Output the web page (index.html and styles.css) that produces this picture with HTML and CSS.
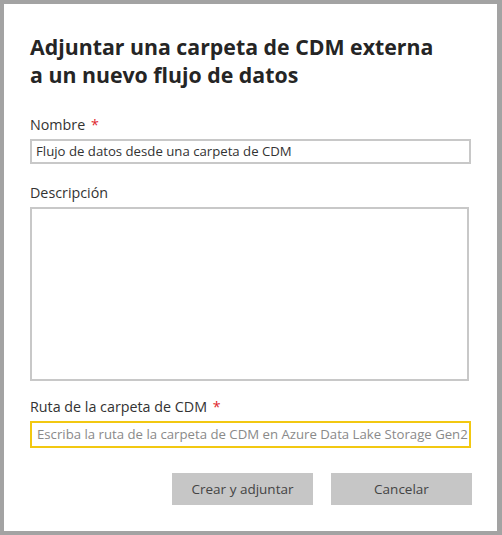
FILE: index.html
```html
<!DOCTYPE html>
<html lang="es">
<head>
<meta charset="utf-8">
<link rel="stylesheet" href="styles.css">
</head>
<body>
<div class="dialog">
  <h1 class="title">Adjuntar una carpeta de CDM externa<br>a un nuevo flujo de datos</h1>
  <div class="field">
    <label class="label">Nombre <span class="req">*</span></label>
    <div class="input">Flujo de datos desde una carpeta de CDM</div>
  </div>
  <div class="field field-desc">
    <label class="label">Descripción</label>
    <div class="textarea"></div>
  </div>
  <div class="field field-path">
    <label class="label">Ruta de la carpeta de CDM <span class="req">*</span></label>
    <div class="input input-focus">Escriba la ruta de la carpeta de CDM en Azure Data Lake Storage Gen2</div>
  </div>
  <div class="actions">
    <button class="btn">Crear y adjuntar</button>
    <button class="btn btn-cancel">Cancelar</button>
  </div>
</div>
</body>
</html>
```

FILE: styles.css
```css
html, body {
  margin: 0;
  padding: 0;
}
body {
  width: 502px;
  height: 535px;
  background: #a3a3a3;
  padding: 4px 5px 4px 4px;
  box-sizing: border-box;
  font-family: "Open Sans", "Noto Sans", sans-serif;
  color: #252525;
}
.dialog {
  background: #ffffff;
  height: 527px;
  box-sizing: border-box;
  padding: 29px 26px 0 26px;
}
.title {
  margin: 0;
  font-size: 21.3px;
  font-weight: 700;
  line-height: 28px;
  letter-spacing: 0;
  color: #252525;
}
.field {
  margin-top: 26px;
}
.field-desc {
  margin-top: 19px;
}
.field-path {
  margin-top: 16px;
}
.label {
  display: block;
  font-size: 14.3px;
  line-height: 20px;
  color: #333;
  margin-bottom: 4px;
}
.req {
  color: #e0262e;
  margin-left: 2px;
}
.input {
  height: 25px;
  width: 441px;
  box-sizing: border-box;
  border: 2px solid #c8c8c8;
  font-size: 13.2px;
  line-height: 21px;
  padding-left: 4px;
  color: #333;
  white-space: nowrap;
  overflow: hidden;
}
.textarea {
  height: 174px;
  width: 439px;
  box-sizing: border-box;
  border: 2px solid #c8c8c8;
}
.input-focus {
  height: 27px;
  border-color: #f2c811;
  color: #8a8a8a;
  line-height: 23px;
  font-size: 13.2px;
  padding-left: 5px;
}
.actions {
  display: flex;
  justify-content: flex-end;
  gap: 18px;
  margin-top: 25px;
  width: 442px;
}
.btn {
  width: 141px;
  height: 32px;
  border: none;
  background: #c6c6c6;
  font-family: inherit;
  font-size: 13.5px;
  color: #444;
  padding: 0;
}
```
